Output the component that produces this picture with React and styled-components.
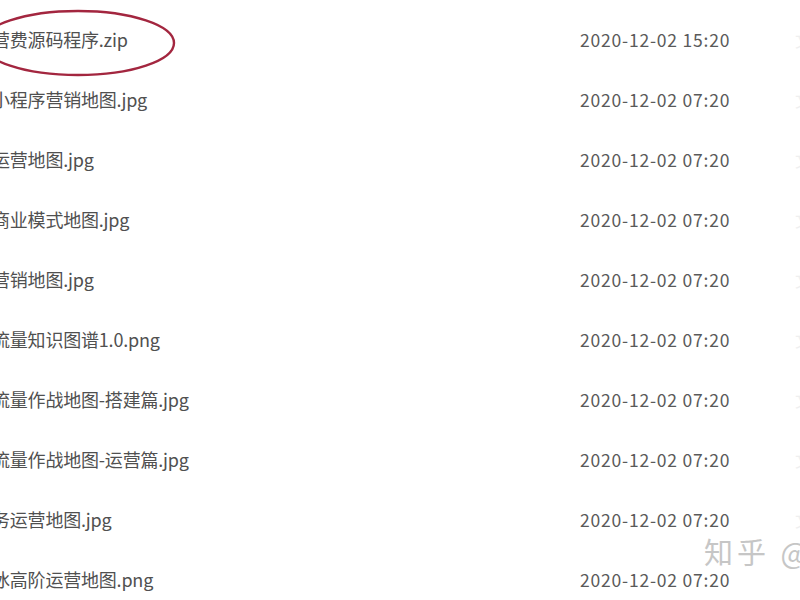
import React from "react";
import styled, { createGlobalStyle } from "styled-components";

const files = [
  { name: "营费源码程序.zip", time: "2020-12-02 15:20", marked: true },
  { name: "小程序营销地图.jpg", time: "2020-12-02 07:20" },
  { name: "运营地图.jpg", time: "2020-12-02 07:20" },
  { name: "商业模式地图.jpg", time: "2020-12-02 07:20" },
  { name: "营销地图.jpg", time: "2020-12-02 07:20" },
  { name: "流量知识图谱1.0.png", time: "2020-12-02 07:20" },
  { name: "流量作战地图-搭建篇.jpg", time: "2020-12-02 07:20" },
  { name: "流量作战地图-运营篇.jpg", time: "2020-12-02 07:20" },
  { name: "务运营地图.jpg", time: "2020-12-02 07:20" },
  { name: "冰高阶运营地图.png", time: "2020-12-02 07:20", last: true },
];

function App() {
  return (
    <>
      <GlobalStyle />
      <Page>
        <FileList>
          {files.map((f) => (
            <Row key={f.name}>
              <Name>
                {f.name}
                {f.marked && (
                  <Circle viewBox="0 0 200 70">
                    <ellipse
                      cx="100"
                      cy="35"
                      rx="96"
                      ry="32"
                      fill="none"
                      stroke="#a3263f"
                      strokeWidth="2.4"
                    />
                  </Circle>
                )}
              </Name>
              <Time>{f.time}</Time>
              {!f.last && <Extra>文</Extra>}
            </Row>
          ))}
        </FileList>
        <Watermark>知乎 @</Watermark>
      </Page>
    </>
  );
}

const GlobalStyle = createGlobalStyle`
  html, body {
    margin: 0;
    padding: 0;
    background: #ffffff;
  }
  body {
    font-family: "Noto Sans CJK SC", "Noto Sans", sans-serif;
  }
`;

const Page = styled.div`
  position: relative;
  width: 800px;
  height: 600px;
  overflow: hidden;
  background: #fff;
`;

const FileList = styled.div`
  display: flex;
  flex-direction: column;
  padding-top: 9px;
`;

const Row = styled.div`
  display: grid;
  grid-template-columns: 588px 215px 40px;
  align-items: center;
  height: 60px;
  margin-left: -8px;
`;

const Name = styled.div`
  position: relative;
  font-size: 18px;
  color: #505050;
  white-space: nowrap;
  letter-spacing: -0.2px;
`;

const Circle = styled.svg`
  position: absolute;
  left: -14px;
  top: -18px;
  width: 200px;
  height: 70px;
`;

const Time = styled.div`
  font-size: 17.5px;
  letter-spacing: 0.8px;
  color: #5a5a5a;
  white-space: nowrap;
`;

const Extra = styled.div`
  font-size: 17px;
  color: #efefef;
`;

const Watermark = styled.div`
  position: absolute;
  left: 704px;
  top: 530px;
  font-size: 29px;
  color: #c6c6c6;
  letter-spacing: 4px;
  white-space: nowrap;
`;

export default App;
